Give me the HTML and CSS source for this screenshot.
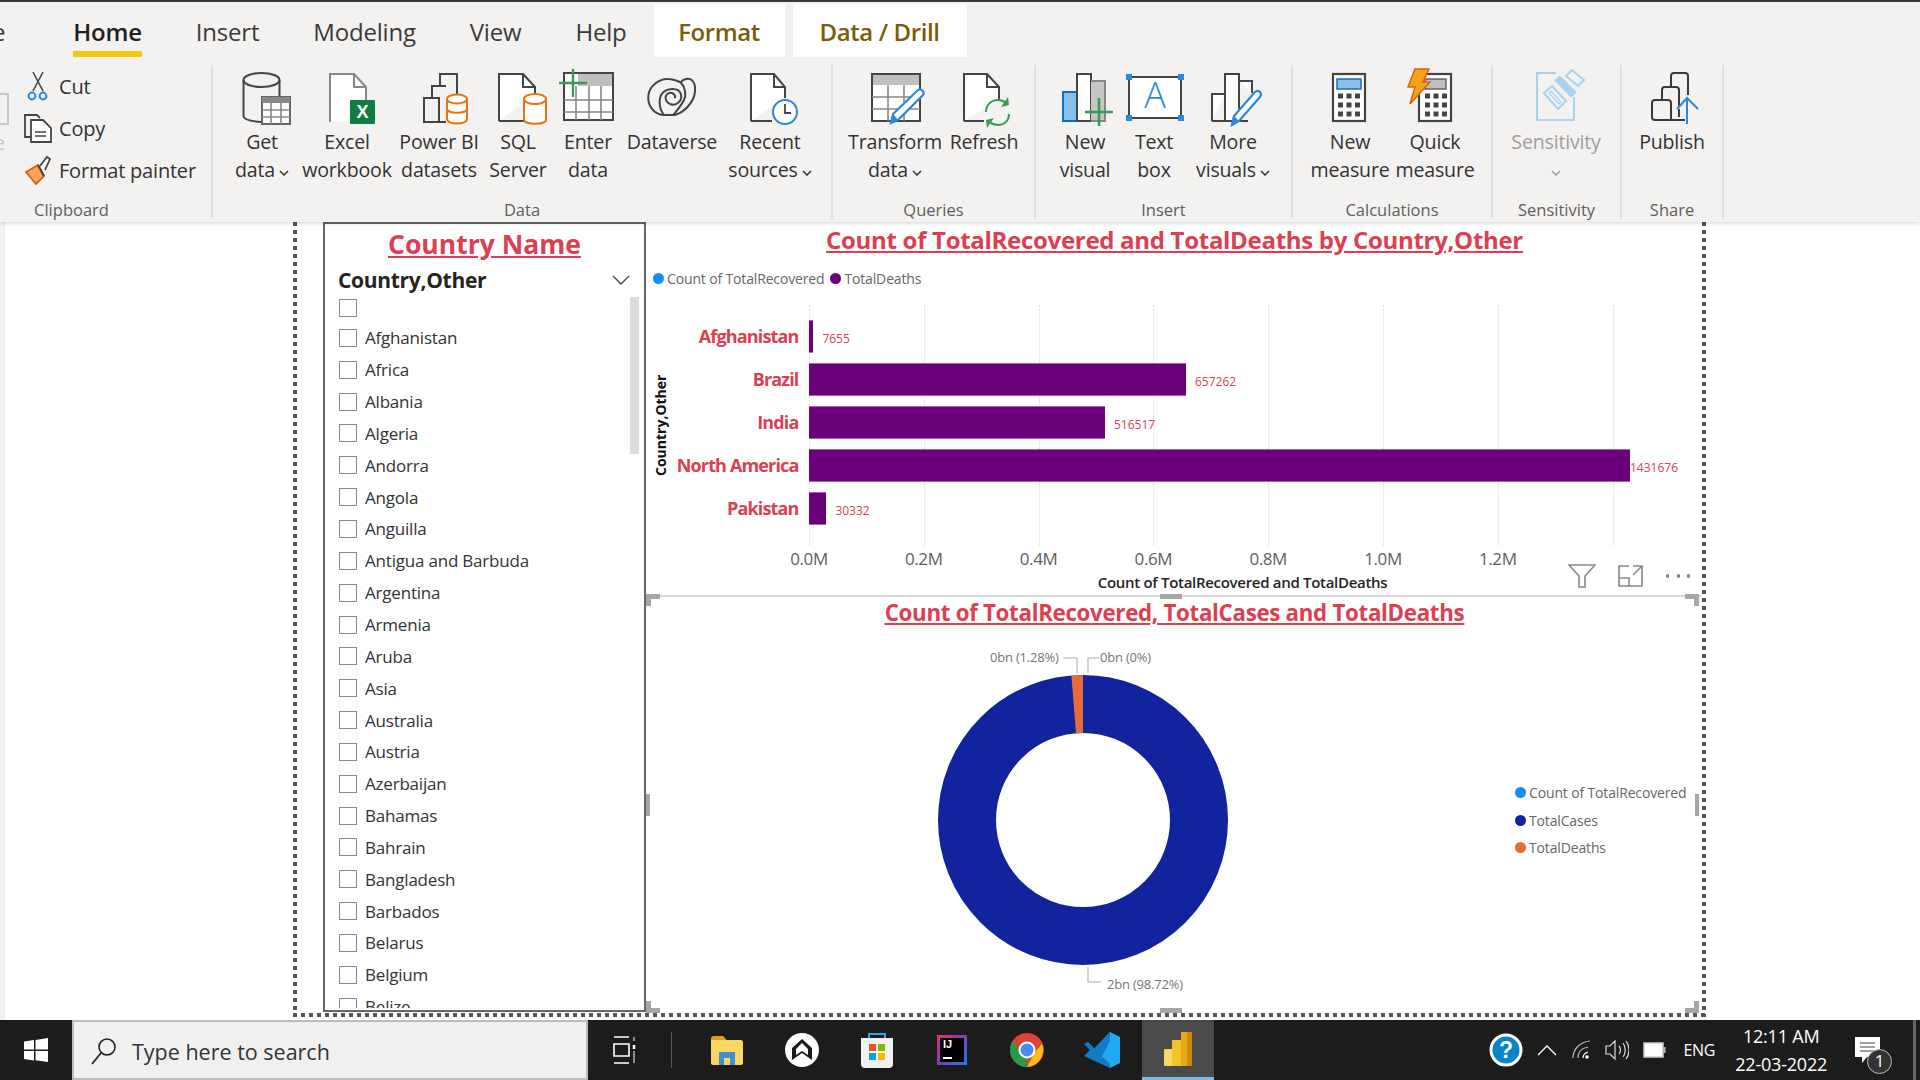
FILE: index.html
```html
<!DOCTYPE html>
<html lang="en">
<head>
  <meta charset="UTF-8">
  <title>Power BI Desktop</title>
  <link rel="stylesheet" href="styles.css">
</head>
<body>

  <!-- Ribbon -->
  <header class="ribbon">
    <nav class="tabs">
      <span class="tab tab-file">File</span>
      <span class="tab tab-active">Home</span>
      <span class="tab">Insert</span>
      <span class="tab">Modeling</span>
      <span class="tab">View</span>
      <span class="tab tab-help">Help</span>
      <span class="tab tab-context tab-format">Format</span>
      <span class="tab tab-context tab-drill">Data / Drill</span>
    </nav>

    <div class="groups">
      <section class="group g-clipboard">
        <div class="group-btns">
          <div class="paste-stub"><span class="paste-box"></span><span class="paste-label">Paste</span></div>
          <div class="small-list">
            <div class="small-btn">
              <svg width="28" height="30" viewBox="0 0 28 30"><path d="M9 1l10 19M19 1L9 20" fill="none" stroke="#444" stroke-width="1.6"/><circle cx="8" cy="25" r="3.4" fill="none" stroke="#2b88d8" stroke-width="2"/><circle cx="19" cy="25" r="3.4" fill="none" stroke="#2b88d8" stroke-width="2"/></svg>
              <span>Cut</span>
            </div>
            <div class="small-btn">
              <svg width="28" height="30" viewBox="0 0 28 30"><path d="M7 24H1V2h12l3 3" fill="none" stroke="#444" stroke-width="1.8"/><path d="M7 7h12l8 8v14H7z" fill="#fff" stroke="#444" stroke-width="1.8"/><path d="M11 19h11M11 23h11" stroke="#444" stroke-width="1.4"/></svg>
              <span>Copy</span>
            </div>
            <div class="small-btn">
              <svg width="28" height="30" viewBox="0 0 28 30"><path d="M2 17l12-7 6 11-8 8z" fill="#f7a55c" stroke="#d9630c" stroke-width="1.8"/><path d="M14 10l6 11" stroke="#444" stroke-width="2"/><path d="M16 11l7-9 3 2-5 11" fill="#fff" stroke="#444" stroke-width="1.8"/></svg>
              <span>Format painter</span>
            </div>
          </div>
        </div>
        <div class="group-label">Clipboard</div>
      </section>

      <section class="group g-data">
        <div class="group-btns">
          <div class="big-btn w98">
            <svg width="60" height="60" viewBox="0 0 60 60"><g fill="none" stroke="#444" stroke-width="2"><ellipse cx="29.500" cy="12" rx="18" ry="7"/><path d="M11.500 12v36c0 3 4 5 18 6M47.500 12v16"/></g><rect x="30" y="29" width="28" height="27" fill="#fff" stroke="#666" stroke-width="2"/><rect x="30" y="29" width="28" height="6" fill="#8a8886"/><path d="M39 35v21M49 35v21M30 42h28M30 49h28" stroke="#8a8886" stroke-width="1.600"/></svg>
            <span>Get</span><span>data<svg class="chev" width="10" height="6" viewBox="0 0 10 6"><path d="M1 1l4 4 4-4" fill="none" stroke="#333" stroke-width="1.500"/></svg></span>
          </div>
          <div class="big-btn w72">
            <svg width="60" height="60" viewBox="0 0 60 60"><path d="M13 54V6h24l12 13v34" fill="#fff" stroke="#8a8886" stroke-width="2"/><path d="M37 6v13h12" fill="none" stroke="#8a8886" stroke-width="2"/><rect x="33" y="32" width="25" height="24" rx="1" fill="#107c41"/><text class="xl-mark" x="45.500" y="50">X</text></svg>
            <span>Excel</span><span>workbook</span>
          </div>
          <div class="big-btn w112">
            <svg width="60" height="60" viewBox="0 0 60 60"><path d="M31 17V6h17v22M23 30V18h14M15 54V30h15v24zM30 54h7M23 30h7" fill="none" stroke="#444" stroke-width="2"/><g fill="#fff" stroke="#e3760f" stroke-width="2"><path d="M38 31v20c0 6 20 6 20 0V31"/><ellipse cx="48" cy="31" rx="10" ry="4.500"/></g><path d="M38 41c0 5 20 5 20 0" fill="none" stroke="#e3760f" stroke-width="2"/></svg>
            <span>Power BI</span><span>datasets</span>
          </div>
          <div class="big-btn w46">
            <svg width="60" height="60" viewBox="0 0 60 60"><path d="M11 53V6h24l12 13v8M36 53H11" fill="#fff" stroke="#444" stroke-width="2"/><path d="M35 6v13h12" fill="none" stroke="#444" stroke-width="2"/><g fill="#fff" stroke="#e3760f" stroke-width="2"><path d="M36 31v21c0 5 22 5 22 0V31"/><ellipse cx="47" cy="31" rx="11" ry="5"/></g></svg>
            <span>SQL</span><span>Server</span>
          </div>
          <div class="big-btn w94">
            <svg width="60" height="60" viewBox="0 0 60 60"><rect x="6" y="5" width="49" height="47" fill="#fff" stroke="#444" stroke-width="2"/><rect x="20" y="6" width="34" height="12" fill="#bfbfbf"/><path d="M6 32h49M6 44h49M18 18v34M31 18v34M43 18v34" stroke="#8a8886" stroke-width="1.600"/><path d="M15 1v28M1 15h28" stroke="#3a9b55" stroke-width="2.400"/></svg>
            <span>Enter</span><span>data</span>
          </div>
          <div class="big-btn w74">
            <svg width="60" height="60" viewBox="0 0 60 60"><g transform="translate(-2 -3) scale(.333)" fill="none" stroke="#444" stroke-width="6"><path d="M75 150C40 150 22 120 25 92 28 62 60 40 85 42 100 42 112 48 122 52 130 42 145 38 155 45 168 55 170 85 155 110 140 135 115 150 100 150 90 150 82 150 75 150z"/><path d="M72 150C55 130 55 95 70 82 85 68 115 68 122 85 130 105 110 125 92 118 75 112 72 92 85 85 95 80 108 88 105 100"/><path d="M122 52C135 65 140 90 132 105 125 120 112 135 100 150"/></g></svg>
            <span>Dataverse</span>
          </div>
          <div class="big-btn w122">
            <svg width="60" height="60" viewBox="0 0 60 60"><path d="M11 53V6h23l11 13v11M32 53H11" fill="#fff" stroke="#444" stroke-width="2"/><path d="M34 6v13h11" fill="none" stroke="#444" stroke-width="2"/><circle cx="45" cy="44" r="12" fill="#fff" stroke="#2b88d8" stroke-width="2"/><path d="M45 36v9h6" fill="none" stroke="#444" stroke-width="1.800"/></svg>
            <span>Recent</span><span>sources<svg class="chev" width="10" height="6" viewBox="0 0 10 6"><path d="M1 1l4 4 4-4" fill="none" stroke="#333" stroke-width="1.500"/></svg></span>
          </div>
        </div>
        <div class="group-label">Data</div>
      </section>

      <section class="group g-queries">
        <div class="group-btns">
          <div class="big-btn w124">
            <svg width="60" height="60" viewBox="0 0 60 60"><rect x="7" y="6" width="48" height="47" fill="#fff" stroke="#444" stroke-width="2"/><rect x="8" y="7" width="46" height="10" fill="#bfbfbf"/><path d="M7 29h48M7 41h48M23 17v36M39 17v36" stroke="#8a8886" stroke-width="1.600"/><path d="M26 55l2-9 25-24c3-2 7 2 5 5L33 52z" fill="#fff" stroke="#2b88d8" stroke-width="2.200"/><path d="M26 55l2-9 5 6z" fill="#2b88d8"/></svg>
            <span>Transform</span><span>data<svg class="chev" width="10" height="6" viewBox="0 0 10 6"><path d="M1 1l4 4 4-4" fill="none" stroke="#333" stroke-width="1.500"/></svg></span>
          </div>
          <div class="big-btn w54">
            <svg width="60" height="60" viewBox="0 0 60 60"><path d="M10 53V6h23l12 13v13M30 53H10" fill="#fff" stroke="#444" stroke-width="2"/><path d="M33 6v13h12" fill="none" stroke="#444" stroke-width="2"/><g fill="none" stroke="#3a9b55" stroke-width="2"><path d="M32 44c0-7 5-12 12-12 3 0 6 1 8 3"/><path d="M55 46c0 7-5 11-11 11-3 0-6-1-8-3"/></g><path d="M47 39l8-2-1-8zM40 50l-8 2 1 8z" fill="#3a9b55"/></svg>
            <span>Refresh</span>
          </div>
        </div>
        <div class="group-label">Queries</div>
      </section>

      <section class="group g-insert">
        <div class="group-btns">
          <div class="big-btn w98">
            <svg width="60" height="60" viewBox="0 0 60 60"><rect x="8" y="24" width="14" height="29" fill="#8ac0ee" stroke="#106ebe" stroke-width="2"/><rect x="22" y="6" width="14" height="47" fill="#fff" stroke="#444" stroke-width="2"/><path d="M36 13h14v40H36" fill="#c8c6c4" stroke="#8a8886" stroke-width="2"/><path d="M44 30v28M30 44h28" stroke="#3a9b55" stroke-width="2.600"/></svg>
            <span>New</span><span>visual</span>
          </div>
          <div class="big-btn w40">
            <svg width="60" height="60" viewBox="0 0 60 60"><rect x="5" y="9" width="52" height="41" fill="#fff" stroke="#444" stroke-width="2"/><rect x="2" y="6" width="6" height="6" fill="#2b88d8"/><rect x="54" y="6" width="6" height="6" fill="#2b88d8"/><rect x="2" y="47" width="6" height="6" fill="#2b88d8"/><rect x="54" y="47" width="6" height="6" fill="#2b88d8"/><text class="tb-mark" x="31" y="40">A</text></svg>
            <span>Text</span><span>box</span>
          </div>
          <div class="big-btn w118">
            <svg width="60" height="60" viewBox="0 0 60 60"><path d="M9 53V26h13M22 53V6h14v47M36 13h13v12M9 53h36" fill="#fff" stroke="#444" stroke-width="2"/><path d="M29 57l2-9 21-24c3-3 8 1 5 5L36 53z" fill="#fff" stroke="#2b88d8" stroke-width="2.200"/><path d="M29 57l2-9 5 5z" fill="#2b88d8"/></svg>
            <span>More</span><span>visuals<svg class="chev" width="10" height="6" viewBox="0 0 10 6"><path d="M1 1l4 4 4-4" fill="none" stroke="#333" stroke-width="1.500"/></svg></span>
          </div>
        </div>
        <div class="group-label">Insert</div>
      </section>

      <section class="group g-calc">
        <div class="group-btns">
          <div class="big-btn w114">
            <svg width="60" height="60" viewBox="0 0 60 60"><rect x="13" y="6" width="32" height="47" fill="#fff" stroke="#444" stroke-width="2.200"/><rect x="17" y="11" width="24" height="10" fill="#8ac0ee" stroke="#106ebe" stroke-width="1.500"/><path d="M18 28h22M18 37h22M18 46h22" stroke="#444" stroke-width="5" stroke-dasharray="5 3.500"/></svg>
            <span>New</span><span>measure</span>
          </div>
          <div class="big-btn w56">
            <svg width="60" height="60" viewBox="0 0 60 60"><rect x="14" y="6" width="32" height="47" fill="#fff" stroke="#444" stroke-width="2.200"/><rect x="20" y="11" width="21" height="10" fill="#bfbfbf" stroke="#666" stroke-width="1.500"/><path d="M20 28h22M20 37h22M20 46h22" stroke="#444" stroke-width="5" stroke-dasharray="5 3.500"/><path d="M10 1h14l-6 13h7L5 36l5-17H3z" fill="#f7a21b" stroke="#d9630c" stroke-width="1.500"/></svg>
            <span>Quick</span><span>measure</span>
          </div>
        </div>
        <div class="group-label">Calculations</div>
      </section>

      <section class="group g-sens">
        <div class="group-btns">
          <div class="big-btn w126 big-btn-off">
            <svg width="60" height="60" viewBox="0 0 60 60"><path d="M30 5H11v47h37V29" fill="none" stroke="#a9d2ec" stroke-width="2"/><path d="M18 25l8-7 14 15-8 8z" fill="none" stroke="#a9d2ec" stroke-width="2"/><path d="M23 25l2-2 10 11-2 2z" fill="none" stroke="#a9d2ec" stroke-width="1.200"/><path d="M31 10l17 17" stroke="#a9d2ec" stroke-width="8"/><path d="M46 2l12 10-6 6-12-10z" fill="#f3f2f1" stroke="#a9d2ec" stroke-width="2"/></svg>
            <span>Sensitivity</span><span><svg class="chev chev-only" width="10" height="6" viewBox="0 0 10 6"><path d="M1 1l4 4 4-4" fill="none" stroke="#a19f9d" stroke-width="1.500"/></svg></span>
          </div>
        </div>
        <div class="group-label">Sensitivity</div>
      </section>

      <section class="group g-share">
        <div class="group-btns">
          <div class="big-btn w100">
            <svg width="60" height="60" viewBox="0 0 60 60"><path d="M29 19V8c0-2 1-3 3-3h11c2 0 3 1 3 3v19M20 32V22c0-2 1-3 3-3h11c2 0 3 1 3 3v27M43 52H13c-2 0-3-1-3-3V35c0-2 1-3 3-3h13c2 0 3 1 3 3v17" fill="none" stroke="#3b3a39" stroke-width="2"/><path d="M45 56V30M35 41l10-11 11 11" fill="#f3f2f1" stroke="#2b88d8" stroke-width="2"/></svg>
            <span>Publish</span>
          </div>
        </div>
        <div class="group-label">Share</div>
      </section>
    </div>
  </header>

  <!-- Report canvas -->
  <main class="canvas">
    <div class="side-pane"></div>
    <div class="report-frame">

      <aside class="slicer">
        <h2 class="slicer-title">Country Name</h2>
        <div class="slicer-head">
          <span>Country,Other</span>
          <svg width="18" height="10" viewBox="0 0 18 10"><path d="M1 1l8 8 8-8" fill="none" stroke="#444" stroke-width="1.300"/></svg>
        </div>
        <div class="slicer-list">
          <div class="slicer-scroll"></div>
          <div class="check-row check-blank"><i></i></div>
          <div class="check-row"><i></i>Afghanistan</div>
          <div class="check-row"><i></i>Africa</div>
          <div class="check-row"><i></i>Albania</div>
          <div class="check-row"><i></i>Algeria</div>
          <div class="check-row"><i></i>Andorra</div>
          <div class="check-row"><i></i>Angola</div>
          <div class="check-row"><i></i>Anguilla</div>
          <div class="check-row"><i></i>Antigua and Barbuda</div>
          <div class="check-row"><i></i>Argentina</div>
          <div class="check-row"><i></i>Armenia</div>
          <div class="check-row"><i></i>Aruba</div>
          <div class="check-row"><i></i>Asia</div>
          <div class="check-row"><i></i>Australia</div>
          <div class="check-row"><i></i>Austria</div>
          <div class="check-row"><i></i>Azerbaijan</div>
          <div class="check-row"><i></i>Bahamas</div>
          <div class="check-row"><i></i>Bahrain</div>
          <div class="check-row"><i></i>Bangladesh</div>
          <div class="check-row"><i></i>Barbados</div>
          <div class="check-row"><i></i>Belarus</div>
          <div class="check-row"><i></i>Belgium</div>
          <div class="check-row"><i></i>Belize</div>
        </div>
      </aside>

      <div class="charts">
        <section class="bar-card">
          <h2 class="chart-title">Count of TotalRecovered and TotalDeaths by Country,Other</h2>
          <div class="legend-inline">
            <span class="legend-item"><i class="dot dot-blue"></i>Count of TotalRecovered</span>
            <span class="legend-item"><i class="dot dot-purple"></i>TotalDeaths</span>
          </div>
          <div class="plot-wrap">
            <div class="y-title">Country,Other</div>
            <div class="plot">
              <div class="gridlines"><i></i><i></i><i></i><i></i><i></i><i></i><i></i><i></i></div>
              <div class="bar-row"><span class="bar-name">Afghanistan</span><span class="bar" style="width:4.4px"></span><span class="bar-val">7655</span></div>
              <div class="bar-row"><span class="bar-name">Brazil</span><span class="bar" style="width:377px"></span><span class="bar-val">657262</span></div>
              <div class="bar-row"><span class="bar-name">India</span><span class="bar" style="width:296px"></span><span class="bar-val">516517</span></div>
              <div class="bar-row"><span class="bar-name">North America</span><span class="bar" style="width:821px"></span><span class="bar-val bar-val-tight">1431676</span></div>
              <div class="bar-row"><span class="bar-name">Pakistan</span><span class="bar" style="width:17.4px"></span><span class="bar-val">30332</span></div>
            </div>
          </div>
          <div class="x-ticks">
            <span>0.0M</span><span>0.2M</span><span>0.4M</span><span>0.6M</span><span>0.8M</span><span>1.0M</span><span>1.2M</span><span>1.4M</span>
          </div>
          <div class="x-title">Count of TotalRecovered and TotalDeaths</div>
          <div class="visual-header">
            <svg width="28" height="24" viewBox="0 0 28 24"><path d="M1 1h26L17 12v11h-6V12z" fill="none" stroke="#888" stroke-width="1.600"/></svg>
            <svg width="25" height="22" viewBox="0 0 25 22"><path d="M11 1H1v20h23V9M1 13h10v8M15 1h9v8M24 1l-9 9" fill="none" stroke="#888" stroke-width="1.600"/></svg>
            <svg width="26" height="4" viewBox="0 0 26 4"><path d="M1 2h3M12 2h3M22 2h3" stroke="#888" stroke-width="3.500"/></svg>
          </div>
        </section>

        <section class="donut-card">
          <span class="handle h-tl"></span><span class="handle h-tr"></span><span class="handle h-bl"></span><span class="handle h-br"></span>
          <span class="handle-mid h-top"></span><span class="handle-mid h-bottom"></span><span class="handle-side h-left"></span><span class="handle-side h-right"></span>
          <h2 class="chart-title">Count of TotalRecovered, TotalCases and TotalDeaths</h2>
          <div class="donut-row">
            <svg class="donut" width="300" height="360" viewBox="0 0 300 360">
              <circle cx="150" cy="174" r="116" fill="none" stroke="#12239e" stroke-width="58"/>
              <path d="M150 29A145 145 0 0 0 138.400 29.500L143 87.300A87 87 0 0 1 150 87Z" fill="#e66c37"/>
              <g fill="none" stroke="#c8c6c4" stroke-width="1.500">
                <path d="M130 12h14v15M166 12h-11v15M155 321v15h13"/>
              </g>
              <text class="donut-label" x="57" y="16">0bn (1.28%)</text>
              <text class="donut-label" x="167" y="16">0bn (0%)</text>
              <text class="donut-label" x="174" y="343">2bn (98.72%)</text>
            </svg>
            <div class="legend-col">
              <span class="legend-item"><i class="dot dot-blue"></i>Count of TotalRecovered</span>
              <span class="legend-item"><i class="dot dot-navy"></i>TotalCases</span>
              <span class="legend-item"><i class="dot dot-orange"></i>TotalDeaths</span>
            </div>
          </div>
        </section>
      </div>
    </div>
  </main>

  <!-- Windows taskbar -->
  <footer class="taskbar">
    <div class="start">
      <svg width="24" height="24" viewBox="0 0 24 24"><path d="M0 3.500l10-1.400V11.500H0zM11.500 1.900L24 0v11.500H11.500zM0 13h10v9.400L0 21zM11.500 13H24v11l-12.500-1.800z" fill="#fff"/></svg>
    </div>
    <div class="search">
      <svg width="26" height="28" viewBox="0 0 26 28"><circle cx="16" cy="10" r="8" fill="none" stroke="#222" stroke-width="1.600"/><path d="M10 16L1 27" stroke="#222" stroke-width="1.800"/></svg>
      <span>Type here to search</span>
    </div>
    <div class="task-view">
      <svg width="24" height="28" viewBox="0 0 24 28"><path d="M2 1h15M2 27h15M2 8h15v12H2z" fill="none" stroke="#fff" stroke-width="1.600"/><path d="M22 9v4" stroke="#fff" stroke-width="2.500"/><path d="M22 15v12M22 1v4" stroke="#fff" stroke-width="1"/></svg>
    </div>
    <div class="task-sep"></div>
    <div class="task-icon">
      <svg width="34" height="30" viewBox="0 0 34 30"><path d="M1 4c0-2 1-3 3-3h9l3 3v6H1z" fill="#dca01a"/><path d="M1 5h30c1 0 2 1 2 2v21c0 1-1 2-2 2H3c-1 0-2-1-2-2z" fill="#fbd665"/><path d="M9 30V17h16v13h-5v-7h-6v7z" fill="#3d8fd1"/></svg>
    </div>
    <div class="task-icon">
      <svg width="36" height="36" viewBox="0 0 36 36"><circle cx="18" cy="18" r="17" fill="#fff"/><path d="M18 7L8 16v12l10-7 10 7V16z" fill="#1a1a1a"/><path d="M18 11l-6 6v6l6-4 6 4v-6z" fill="#fff"/></svg>
    </div>
    <div class="task-icon">
      <svg width="36" height="36" viewBox="0 0 36 36"><path d="M10 6V2h16v4" fill="none" stroke="#29a9ea" stroke-width="2"/><path d="M2 6h32v26c0 2-1 4-4 4H6c-3 0-4-2-4-4z" fill="#f2f2f2"/><rect x="10" y="12" width="7" height="7" fill="#f25022"/><rect x="19" y="12" width="7" height="7" fill="#7fba00"/><rect x="10" y="21" width="7" height="7" fill="#00a4ef"/><rect x="19" y="21" width="7" height="7" fill="#ffb900"/></svg>
    </div>
    <div class="task-icon">
      <div class="ij-icon"><span class="ij-inner">IJ<b></b></span></div>
    </div>
    <div class="task-icon">
      <svg width="34" height="34" viewBox="0 0 34 34"><circle cx="17" cy="17" r="17" fill="#db4437"/><path d="M17 34A17 17 0 0 1 2.300 8.500L11 17l6 8z" fill="#2a9a47"/><path d="M17 34l8-15 7-8a17 17 0 0 1-15 23z" fill="#fbc116"/><circle cx="17" cy="17" r="8.500" fill="#fff"/><circle cx="17" cy="17" r="6.500" fill="#4a8af4"/></svg>
    </div>
    <div class="task-icon">
      <svg width="38" height="36" viewBox="0 0 38 36"><path d="M27 0l10 5v26l-10 5L9 19z" fill="#23a9f2"/><path d="M27 0L9 19l9 7L27 9z" fill="#0f7cc3"/><path d="M1 12l4-2 22 22v4L1 24l6-6z" fill="#0f7cc3"/></svg>
    </div>
    <div class="task-icon task-active">
      <svg width="28" height="34" viewBox="0 0 28 34"><rect x="0" y="17" width="11" height="17" rx="1" fill="#f5d865"/><rect x="8" y="8" width="11" height="26" rx="1" fill="#f0c32d"/><rect x="17" y="0" width="11" height="34" rx="1" fill="#c98a07"/><rect x="17" y="0" width="6" height="34" fill="#e7a916"/></svg>
    </div>
    <div class="tray">
      <svg class="tray-help" width="34" height="34" viewBox="0 0 34 34"><circle cx="17" cy="17" r="15" fill="#0a84c6" stroke="#fff" stroke-width="3"/><text class="help-mark" x="17" y="25">?</text></svg>
      <svg width="20" height="12" viewBox="0 0 20 12"><path d="M1 11l9-9 9 9" fill="none" stroke="#fff" stroke-width="1.300"/></svg>
      <svg width="20" height="20" viewBox="0 0 20 20"><g fill="none" stroke="#bbb" stroke-width="1.200"><path d="M2 18C2 9 9 2 19 1"/><path d="M7 18c0-6 4-10 10-11"/></g><path d="M12 18c0-3 2-5 5-6" fill="none" stroke="#fff" stroke-width="1.300"/><circle cx="16" cy="17" r="1.800" fill="#fff"/></svg>
      <svg width="24" height="22" viewBox="0 0 24 22"><path d="M1 7h4l5-5v18l-5-5H1z" fill="none" stroke="#ddd" stroke-width="1.200"/><path d="M14 7c2 2 2 6 0 8M18 4c3 4 3 10 0 14M21 2c4 5 4 13 0 18" fill="none" stroke="#ddd" stroke-width="1.200"/></svg>
      <svg width="23" height="16" viewBox="0 0 23 16"><rect x="1" y="1" width="19" height="14" fill="#fff" stroke="#ccc" stroke-width="1.500"/><rect x="20.500" y="5" width="2" height="6" fill="#bbb"/></svg>
      <span class="tray-lang">ENG</span>
      <div class="clock"><span>12:11 AM</span><span>22-03-2022</span></div>
      <div class="notify">
        <svg width="25" height="26" viewBox="0 0 25 26"><path d="M0 0h25v20H12l-5 6v-6H0z" fill="#fff"/><path d="M5 6h15M5 10h15M5 14h15" stroke="#444" stroke-width="1.200"/></svg>
        <span class="notify-badge">1</span>
      </div>
    </div>
  </footer>

</body>
</html>
```

FILE: styles.css
```css
* {
  box-sizing: border-box;
}
html, body {
  margin: 0;
  height: 100%;
}
body {
  width: 1920px;
  height: 1080px;
  overflow: hidden;
  display: flex;
  flex-direction: column;
  font-family: "Open Sans", "Noto Sans", sans-serif;
  background: #fff;
  color: #333;
}

/* Ribbon */
.ribbon {
  height: 222px;
  flex: none;
  background: #f3f2f1;
  border-top: 2px solid #3b3a39;
  position: relative;
  z-index: 2;
  box-shadow: 0 1px 4px rgba(0, 0, 0, 0.18);
  overflow: hidden;
}
.tabs {
  display: flex;
  height: 55px;
  margin-left: -59px;
}
.tab {
  padding: 0 27px;
  height: 55px;
  font-size: 24px;
  line-height: 59px;
  color: #3b3a39;
  white-space: nowrap;
  letter-spacing: -0.2px;
}
.tab-file {
  margin-right: 14px;
}
.tab-active {
  font-weight: 600;
  color: #201f1e;
  position: relative;
}
.tab-active::after {
  content: "";
  position: absolute;
  left: 27px;
  right: 27px;
  bottom: 0;
  height: 6px;
  background: #f2c811;
}
.tab-context {
  background: #fff;
  color: #7a5c0a;
  font-weight: 600;
  margin-top: 2px;
  height: 53px;
  line-height: 55px;
  padding: 0;
  text-align: center;
  letter-spacing: -0.4px;
}
.tab-format {
  width: 131px;
  margin-right: 8px;
}
.tab-drill {
  width: 174px;
}
.tab-help {
  margin-right: 0;
}

.groups {
  display: flex;
  height: 153px;
  margin-top: 8px;
}
.group {
  display: flex;
  flex-direction: column;
  border-right: 2px solid #e1dfdd;
  flex: none;
}
.g-clipboard { width: 281px; margin-left: -68px; }
.g-data { width: 620px; }
.g-queries { width: 203px; }
.g-insert { width: 257px; }
.g-calc { width: 200px; }
.g-sens { width: 129px; }
.g-share { width: 102px; }
.group-btns {
  flex: 1;
  display: flex;
}
.group-label {
  height: 16px;
  font-size: 16.5px;
  line-height: 16px;
  text-align: center;
  color: #605e5c;
}

/* Clipboard column */
.paste-stub {
  width: 77px;
  display: flex;
  flex-direction: column;
  align-items: flex-end;
  color: #c8c6c4;
  font-size: 20px;
}
.paste-box {
  width: 40px;
  height: 32px;
  margin-top: 28px;
  border: 2px solid #c8c6c4;
}
.paste-label {
  margin-top: 4px;
  margin-right: 4px;
  line-height: 28px;
}
.small-list {
  margin-left: 15px;
}
.small-btn {
  display: flex;
  align-items: center;
  gap: 7px;
  height: 42px;
  font-size: 20px;
  white-space: nowrap;
  letter-spacing: -0.2px;
}

/* Big ribbon buttons */
.big-btn {
  display: flex;
  flex-direction: column;
  align-items: center;
  padding-top: 3px;
  font-size: 19.6px;
  line-height: 28px;
  white-space: nowrap;
  letter-spacing: -0.2px;
  flex: none;
}
.big-btn > svg {
  flex: none;
}
.big-btn-off {
  color: #a19f9d;
}
.chev {
  margin-left: 4px;
  vertical-align: 1px;
}
.chev-only {
  margin-left: 0;
}
.w40 { width: 40px; }
.w46 { width: 46px; }
.w54 { width: 54px; }
.w56 { width: 56px; }
.w72 { width: 72px; }
.w74 { width: 74px; }
.w94 { width: 94px; }
.w98 { width: 98px; }
.w100 { width: 100px; }
.w112 { width: 112px; }
.w114 { width: 114px; }
.w118 { width: 118px; }
.w122 { width: 122px; }
.w124 { width: 124px; }
.w126 { width: 126px; }
.xl-mark {
  font-family: "Liberation Sans", sans-serif;
  font-size: 18px;
  font-weight: bold;
  fill: #fff;
  text-anchor: middle;
}
.tb-mark {
  font-family: "Open Sans", sans-serif;
  font-size: 36px;
  font-weight: 300;
  fill: #2b88d8;
  text-anchor: middle;
}

/* Canvas */
.canvas {
  flex: 1;
  display: flex;
  min-height: 0;
  background: #fff;
}
.side-pane {
  width: 5px;
  background: #f3f2f1;
}
.report-frame {
  width: 1413px;
  height: 795px;
  margin-left: 288px;
  padding: 0 4px 5px 30px;
  display: flex;
  background:
    linear-gradient(90deg, #555 55%, transparent 55%) left bottom / 8px 4px repeat-x,
    linear-gradient(#555 55%, transparent 55%) left top / 4px 8px repeat-y,
    linear-gradient(#555 55%, transparent 55%) right top / 4px 8px repeat-y;
}

/* Slicer */
.slicer {
  width: 323px;
  height: 790px;
  margin-right: 2px;
  border: 2px solid #666;
  background: #fff;
  display: flex;
  flex-direction: column;
  flex: none;
}
.slicer-title {
  margin: 0;
  height: 39px;
  font-size: 26.5px;
  line-height: 40px;
  font-weight: 700;
  text-align: center;
  color: #dc4050;
  text-decoration: underline;
}
.slicer-head {
  display: flex;
  justify-content: space-between;
  align-items: center;
  height: 34px;
  padding: 0 14px 0 13px;
  font-size: 21px;
  font-weight: 700;
  color: #252423;
  letter-spacing: -0.3px;
}
.slicer-list {
  flex: 1;
  overflow: hidden;
  position: relative;
  padding-left: 14px;
  margin-bottom: 2px;
}
.slicer-scroll {
  position: absolute;
  right: 5px;
  top: 0;
  width: 9px;
  height: 157px;
  background: #dcdcdc;
}
.check-row {
  display: flex;
  align-items: center;
  height: 31.85px;
  font-size: 17px;
  color: #333;
  gap: 8px;
  letter-spacing: -0.2px;
}
.check-row i {
  width: 18px;
  height: 18px;
  border: 1.5px solid #8a8886;
  flex: none;
}
.check-blank {
  height: 25px;
  align-items: flex-start;
  padding-top: 2px;
}

/* Charts */
.charts {
  width: 1053px;
  flex: none;
  display: flex;
  flex-direction: column;
}
.chart-title {
  margin: 0;
  font-size: 24px;
  font-weight: 700;
  text-align: center;
  color: #dc4050;
  text-decoration: underline;
  white-space: nowrap;
  letter-spacing: -0.3px;
}
.bar-card {
  height: 373px;
  position: relative;
  flex: none;
}
.bar-card .chart-title {
  height: 36px;
  line-height: 36px;
}
.legend-inline {
  display: flex;
  gap: 6px;
  height: 24px;
  margin-top: 8px;
  padding-left: 5px;
  align-items: center;
}
.legend-item {
  display: flex;
  align-items: center;
  gap: 3px;
  font-size: 14px;
  color: #666;
  letter-spacing: -0.15px;
  white-space: nowrap;
}
.dot {
  width: 11px;
  height: 11px;
  border-radius: 50%;
  flex: none;
}
.dot-blue { background: #118dff; }
.dot-purple { background: #6b007b; }
.dot-navy { background: #12239e; }
.dot-orange { background: #e66c37; }

.plot-wrap {
  display: flex;
  height: 240px;
  margin-top: 15px;
}
.y-title {
  width: 26px;
  writing-mode: vertical-rl;
  transform: rotate(180deg);
  text-align: center;
  font-size: 14px;
  font-weight: 700;
  color: #111;
  line-height: 16px;
  padding-right: 5px;
}
.plot {
  flex: 1;
  position: relative;
  padding-top: 15px;
}
.gridlines {
  position: absolute;
  left: 135px;
  top: 0;
  bottom: 0;
  display: flex;
}
.gridlines i {
  width: 114.8px;
  border-left: 1px dotted #d8d8d8;
}
.bar-row {
  display: flex;
  align-items: center;
  height: 33px;
  margin-bottom: 10px;
  position: relative;
}
.bar-name {
  width: 124.5px;
  margin-right: 10.5px;
  margin-top: -1px;
  text-align: right;
  font-size: 18px;
  font-weight: 700;
  color: #dc4050;
  white-space: nowrap;
  letter-spacing: -0.85px;
  flex: none;
}
.bar {
  height: 33px;
  background: #6b007b;
  border-top: 1px solid #a864b0;
  border-bottom: 1px solid #a864b0;
  flex: none;
}
.bar-val {
  margin-left: 9px;
  margin-top: 3px;
  font-size: 12px;
  color: #dc4050;
}
.bar-val-tight {
  margin-left: 0;
}
.x-ticks {
  display: flex;
  height: 26px;
  margin-top: 1px;
  margin-left: 103.6px;
}
.x-ticks span {
  width: 114.8px;
  text-align: center;
  font-size: 17px;
  line-height: 26px;
  color: #605e5c;
  letter-spacing: -0.4px;
}
.x-title {
  margin-left: 161px;
  width: 867px;
  text-align: center;
  height: 20px;
  font-size: 15px;
  line-height: 20px;
  font-weight: 600;
  color: #252423;
  letter-spacing: -0.3px;
}
.visual-header {
  position: absolute;
  right: 0;
  bottom: 0;
  width: 146px;
  height: 42px;
  background: #fff;
  display: flex;
  align-items: center;
  gap: 22px;
  padding: 3px 0 0 13px;
}

.donut-card {
  flex: 1;
  position: relative;
  border-top: 2px solid #d9d9d9;
}
.donut-card .chart-title {
  height: 30px;
  line-height: 32px;
  font-size: 22.3px;
}
.donut-row {
  display: flex;
  padding-left: 285px;
  margin-top: 19px;
}
.donut {
  flex: none;
}
.donut-label {
  font-size: 13px;
  fill: #777;
  letter-spacing: -0.2px;
}
.legend-col {
  margin-left: 282px;
  margin-top: 133px;
  display: flex;
  flex-direction: column;
}
.legend-col .legend-item {
  height: 27.5px;
  font-size: 14px;
}

/* Selection handles */
.handle, .handle-mid, .handle-side {
  position: absolute;
}
.handle {
  width: 14px;
  height: 12px;
  border: 0 solid #a6a6a6;
}
.h-tl { left: -2px; top: -3px; border-width: 5px 0 0 5px; }
.h-tr { right: 2px; top: -3px; border-width: 5px 5px 0 0; }
.h-bl { left: -2px; bottom: -1px; border-width: 0 0 5px 5px; }
.h-br { right: 2px; bottom: -1px; border-width: 0 5px 5px 0; }
.handle-mid {
  left: 512px;
  width: 22px;
  height: 5px;
  background: #a6a6a6;
}
.h-top { top: -3px; }
.h-bottom { bottom: -1px; }
.handle-side {
  top: 197px;
  width: 4px;
  height: 22px;
  background: #a6a6a6;
}
.h-left { left: -2px; }
.h-right { right: 2px; }

/* Taskbar */
.taskbar {
  height: 60px;
  flex: none;
  background: #1c1c1c;
  display: flex;
  align-items: center;
  position: relative;
}
.taskbar::after {
  content: "";
  position: absolute;
  left: 1913px;
  top: 0;
  bottom: 0;
  width: 3px;
  background: #666;
}
.start {
  width: 72px;
  display: flex;
  justify-content: center;
}
.search {
  width: 516px;
  height: 60px;
  background: #f0f0f0;
  border: 2px solid #bdbdbd;
  display: flex;
  align-items: center;
  padding: 2px 0 0 17px;
  gap: 15px;
  font-size: 21.5px;
  color: #333;
}
.task-view {
  width: 72px;
  display: flex;
  justify-content: center;
}
.task-sep {
  width: 1px;
  height: 36px;
  margin: 0 17.5px 0 11px;
  background: #555;
}
.task-icon {
  width: 75px;
  height: 60px;
  display: flex;
  align-items: center;
  justify-content: center;
  flex: none;
}
.task-active {
  width: 72px;
  margin-left: 2px;
  background: #4a4a4a;
  border-bottom: 3px solid #76b9ed;
}
.ij-icon {
  width: 30px;
  height: 30px;
  padding: 3px;
  background: linear-gradient(135deg, #e0316e, #7b3fb5 50%, #1a7ef5);
}
.ij-inner {
  display: block;
  width: 24px;
  height: 24px;
  background: #000;
  color: #fff;
  font-family: "Liberation Sans", sans-serif;
  font-size: 11px;
  font-weight: 700;
  line-height: 13px;
  padding-left: 3px;
  position: relative;
}
.ij-inner b {
  position: absolute;
  left: 3px;
  bottom: 3px;
  width: 9px;
  height: 2px;
  background: #fff;
}
.tray {
  flex: 1;
  display: flex;
  align-items: center;
  padding-left: 275px;
  gap: 14px;
  color: #fff;
}
.help-mark {
  font-family: "Liberation Sans", sans-serif;
  font-size: 23px;
  font-weight: 700;
  fill: #fff;
  text-anchor: middle;
}
.tray-lang {
  font-size: 16px;
  margin-left: 4px;
  letter-spacing: -0.3px;
}
.clock {
  display: flex;
  flex-direction: column;
  align-items: center;
  width: 120px;
  font-size: 18px;
  line-height: 28px;
  letter-spacing: -0.2px;
  margin-left: -8px;
}
.notify {
  position: relative;
  flex: none;
  width: 40px;
  height: 40px;
  margin: 14px 0 0 0;
}
.notify-badge {
  position: absolute;
  left: 12px;
  top: 12px;
  width: 25px;
  height: 25px;
  border-radius: 50%;
  background: #333;
  border: 1px solid #bbb;
  font-size: 17px;
  line-height: 22px;
  text-align: center;
}
```
